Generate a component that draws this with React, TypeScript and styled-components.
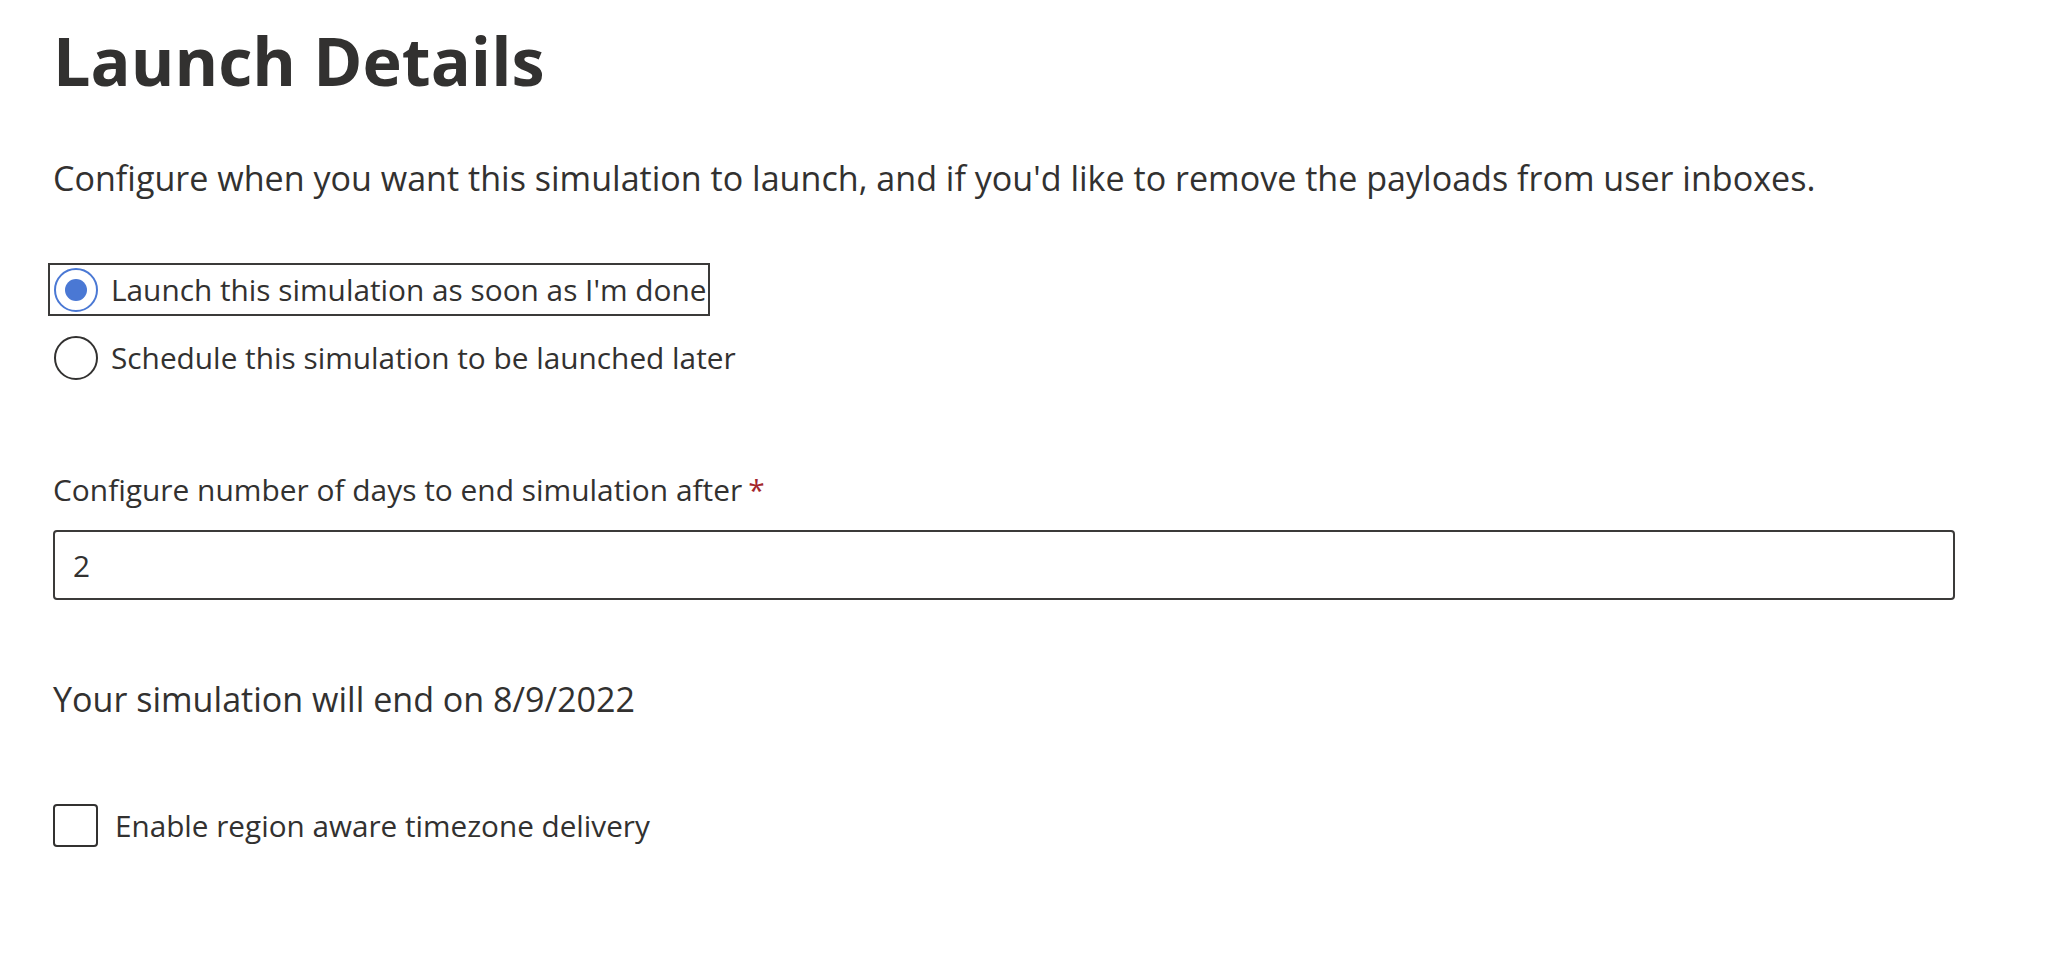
import React, { useState } from "react";
import styled, { createGlobalStyle } from "styled-components";

const GlobalStyle = createGlobalStyle`
  html, body {
    margin: 0;
    padding: 0;
    background: #ffffff;
  }
  body {
    font-family: "Segoe UI", "Open Sans", "Noto Sans", sans-serif;
    color: #323130;
  }
  * { box-sizing: border-box; }
`;

const Page = styled.main`
  display: flex;
  flex-direction: column;
  padding: 20px 94px 60px 53px;
  width: 2049px;
`;

const Title = styled.h1`
  margin: 0;
  font-size: 66.5px;
  line-height: 80px;
  font-weight: 700;
  color: #323130;
`;

const Lead = styled.p<{ $mt: number }>`
  margin: ${(p) => p.$mt}px 0 0;
  font-size: 34.1px;
  line-height: 46px;
  font-weight: 400;
  color: #323130;
`;

const RadioGroup = styled.div`
  display: flex;
  flex-direction: column;
  gap: 15px;
  margin-top: 62px;
  align-items: flex-start;
`;

const RadioRow = styled.label<{ $focused?: boolean }>`
  display: flex;
  align-items: center;
  height: 53px;
  padding: 0 2px 0 4px;
  margin-left: -5px;
  border: 2px solid ${(p) => (p.$focused ? "#3b3a39" : "transparent")};
  cursor: pointer;
`;

const RadioCircle = styled.span<{ $checked?: boolean }>`
  width: 44px;
  height: 44px;
  border-radius: 50%;
  border: 2px solid ${(p) => (p.$checked ? "#4a78d4" : "#323130")};
  flex: none;
  display: flex;
  align-items: center;
  justify-content: center;
  &::after {
    content: "";
    width: 22px;
    height: 22px;
    border-radius: 50%;
    background: #4a78d4;
    display: ${(p) => (p.$checked ? "block" : "none")};
  }
`;

const OptionText = styled.span`
  margin-left: 13px;
  font-size: 29.8px;
  line-height: 40px;
  color: #323130;
`;

const FieldLabel = styled.div`
  margin-top: 86px;
  font-size: 29.9px;
  line-height: 40px;
  color: #323130;
`;

const Required = styled.span`
  color: #a4262c;
  margin-left: 6px;
`;

const TextBox = styled.div`
  margin-top: 20px;
  height: 70px;
  border: 2px solid #3b3a39;
  border-radius: 4px;
  display: flex;
  align-items: center;
  padding: 0 18px;
  font-size: 29.8px;
  color: #323130;
`;

const CheckRow = styled.label`
  display: flex;
  align-items: center;
  margin-top: 81px;
  height: 45px;
  cursor: pointer;
`;

const CheckBox = styled.span`
  width: 45px;
  height: 43px;
  border: 2px solid #323130;
  border-radius: 4px;
  flex: none;
`;

const CheckText = styled.span`
  margin-left: 17px;
  font-size: 29.7px;
  line-height: 40px;
  color: #323130;
`;

export default function App() {
  const [choice, setChoice] = useState(0);
  return (
    <>
      <GlobalStyle />
      <Page>
        <Title>Launch Details</Title>
        <Lead $mt={55}>
          Configure when you want this simulation to launch, and if you'd like to remove the payloads from user inboxes.
        </Lead>
        <RadioGroup role="radiogroup">
          <RadioRow $focused onClick={() => setChoice(0)}>
            <RadioCircle $checked={choice === 0} />
            <OptionText>Launch this simulation as soon as I'm done</OptionText>
          </RadioRow>
          <RadioRow onClick={() => setChoice(1)}>
            <RadioCircle $checked={choice === 1} />
            <OptionText>Schedule this simulation to be launched later</OptionText>
          </RadioRow>
        </RadioGroup>
        <FieldLabel>
          Configure number of days to end simulation after<Required>*</Required>
        </FieldLabel>
        <TextBox>2</TextBox>
        <Lead $mt={76}>Your simulation will end on 8/9/2022</Lead>
        <CheckRow>
          <CheckBox />
          <CheckText>Enable region aware timezone delivery</CheckText>
        </CheckRow>
      </Page>
    </>
  );
}
